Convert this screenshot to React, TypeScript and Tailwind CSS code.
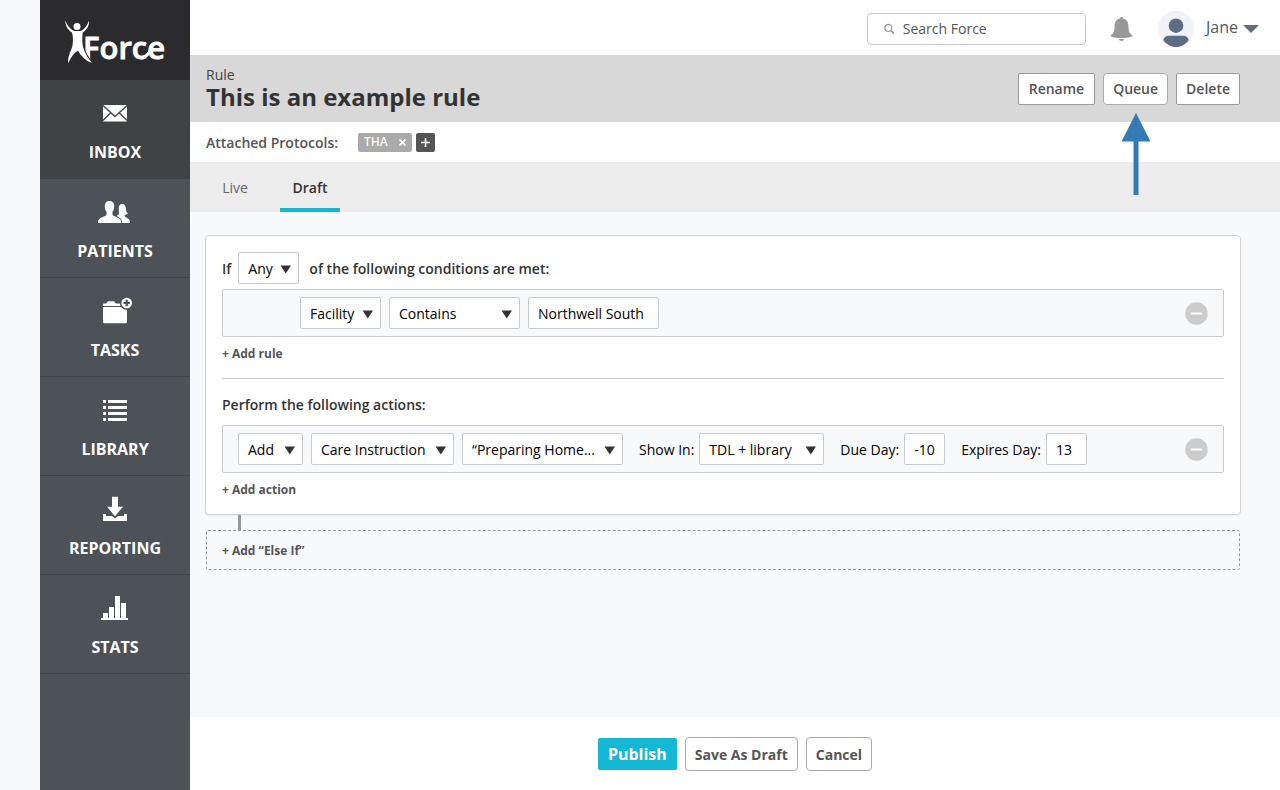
import type { ReactNode } from "react"

type NavItem = {
  label: string
  icon: ReactNode
  active?: boolean
}

type SelectProps = {
  label: string
  options: string[]
  className: string
}

const navItems: NavItem[] = [
  {
    label: "INBOX",
    active: true,
    icon: (
      <>
        <path d="M8 7h24v16.500H8z" />
        <path
          d="M8 7.500l12 11 12-11M8 22.500l8-8M32 22.500l-8-8"
          fill="none"
          stroke="#3f4344"
          strokeWidth="1.300"
        />
      </>
    ),
  },
  {
    label: "PATIENTS",
    icon: (
      <>
        <path d="M27 7c2.500 0 3.800 1.800 3.900 4.400.1 2.200.7 3.900 2 5.400-.9.800-2 1.100-3.200 1.100v1c0 1.500 5.300 2.400 5.300 5.600V26H24l-3-6.400 2.500-2c1-1.400.2-3.200.2-5.900C23.700 9 24.700 7 27 7z" />
        <path
          d="M14.500 4c3 0 4.700 1.800 4.700 4.700s-.6 4.900-1.700 6.100v2.700c0 2.200 8.700 2.600 8.700 7.500v1H3v-1c0-4.900 8.500-5.300 8.500-7.500v-2.700c-1.100-1.200-1.700-3.200-1.700-6.100S11.500 4 14.500 4z"
          stroke="#4d5158"
          strokeWidth="1.800"
          paintOrder="stroke"
        />
      </>
    ),
  },
  {
    label: "TASKS",
    icon: (
      <>
        <path d="M8 10V8.500c0-.7.4-1 1-1h2.200l1.800-2.300h6l1.800 2.300H32V10z" />
        <path d="M8 11h24v15c0 .7-.4 1.200-1.200 1.200H9.200C8.400 27.200 8 26.700 8 26z" />
        <circle cx="31.700" cy="7" r="6.800" fill="#4d5158" />
        <circle cx="31.700" cy="7" r="5.300" />
        <path d="M31.700 3.800v6.400M28.500 7h6.400" stroke="#4d5158" strokeWidth="2.200" />
      </>
    ),
  },
  {
    label: "LIBRARY",
    icon: (
      <path d="M8 5h3v3H8zM13 5h19v3H13zM8 11h3v3H8zM13 11h19v3H13zM8 17h3v3H8zM13 17h19v3H13zM8 23h3v3H8zM13 23h19v3H13z" />
    ),
  },
  {
    label: "REPORTING",
    icon: (
      <>
        <path d="M17 2.700h6v10h5l-8 9.600-8-9.600h5z" />
        <path d="M8 20h3v2h6l3 2.500 3-2.500h6v-2h3v7H8z" />
      </>
    ),
  },
  {
    label: "STATS",
    icon: (
      <path d="M6 25h27v2H6zM8 20h5v5H8zM14 14h5v11h-5zM20 3h5v22h-5zM26 10h5v15h-5z" />
    ),
  },
]

const Logo = (): JSX.Element => (
  <svg width="110" height="60" viewBox="-3 -6 110 60" fill="#fff">
    <text
      x="20"
      y="43"
      fontSize="31"
      fontWeight="600"
      fontFamily="Open Sans, sans-serif"
      stroke="#fff"
      strokeWidth=".8">
      Force
    </text>
    {/* ribbon joining the c and the e */}
    <path d="M80 41.500c5-.5 6.500-7 9.500-10" fill="none" stroke="#fff" strokeWidth="3" />
    <g stroke="#2b2b2d" strokeWidth="2" paintOrder="stroke">
      <path d="M2.300 4.500C2.200 10 5 14 9 16.500c1.200 4 1.300 9 .3 14C7.500 36 4.500 41 5.300 47c2.700-6 6-10.500 9.700-12.500 3 5.500 7.500 10.500 14 12.300-4-4.500-7.500-10-9-16-1-5-.8-10-.2-14.300C23.500 14 26.500 10 26 4.500c-1.600 5-4.500 9-8.500 10.500h-6C7.500 13.500 4.300 10 2.300 4.500z" />
      <circle cx="14" cy="10.500" r="3.500" />
    </g>
  </svg>
)

const Sidebar = (): JSX.Element => (
  <aside className="w-[150px] shrink-0 bg-[#4d5158]">
    <a
      href="#"
      aria-label="Force"
      className="flex justify-center items-center h-20 bg-[#2b2b2d]">
      <Logo />
    </a>
    <nav>
      {navItems.map(({ label, icon, active }) => (
        <a
          key={label}
          href="#"
          className={`flex flex-col items-center gap-3 pt-[18px] h-[99px] text-white text-base leading-6 font-bold border-b border-[#404448] ${
            active ? "bg-[#3f4344]" : ""
          }`}>
          <svg width="40" height="30" viewBox="0 0 40 30" fill="#fff">
            {icon}
          </svg>
          {label}
        </a>
      ))}
    </nav>
  </aside>
)

const Header = (): JSX.Element => (
  <header className="flex justify-end items-center pt-[3px] pr-[21px] h-[55px] bg-white">
    <label className="flex gap-2 items-center px-4 w-[219px] h-8 bg-white border border-[#c8c8c8] rounded">
      <svg width="12" height="12" viewBox="0 0 12 12" fill="none" stroke="#999">
        <circle cx="4.800" cy="4.800" r="3.900" strokeWidth="1.400" />
        <path d="M7.600 7.600l3.600 3.600" strokeWidth="1.900" />
      </svg>
      <input
        type="search"
        aria-label="Search Force"
        placeholder="Search Force"
        className="w-full text-sm placeholder:text-[#555] outline-none"
      />
    </label>
    <button type="button" aria-label="Notifications" className="ml-6">
      <svg width="23" height="26" viewBox="0 0 23 26" fill="#999">
        <path d="M11.500 1c1 0 1.700.7 1.700 1.600 3.800 1 5.300 4 5.300 8.400 0 4.500 1 6.500 3.700 8.200.5.400.4 1-.2 1.200-3 1-6.500 1.500-10.500 1.500S4 21.400 1 20.400c-.6-.2-.7-.8-.2-1.200C3.500 17.500 4.500 15.500 4.500 11c0-4.400 1.500-7.400 5.300-8.400C9.800 1.700 10.500 1 11.500 1z" />
        <path d="M8.800 23h5.400c-.4 1.200-1.400 1.900-2.700 1.900S9.200 24.200 8.800 23z" />
      </svg>
    </button>
    <button
      type="button"
      className="flex gap-[5px] items-center ml-[25px] text-[#4d5a6c] text-base">
      <svg width="36" height="36" viewBox="0 0 36 36">
        <circle cx="18" cy="18" r="18" fill="#f0f2f6" />
        <circle cx="18" cy="14.700" r="7.300" fill="#5d6d84" />
        <path
          d="M11 24.700h14c3 0 5 1.500 5.800 4.300-3 4.300-7.500 7-12.800 7S8.200 33.300 5.200 29c.8-2.800 2.800-4.300 5.800-4.300z"
          fill="#5d6d84"
        />
      </svg>
      <span className="pb-1 pl-[7px]">Jane</span>
      <svg width="16" height="8" viewBox="0 0 16 8">
        <path d="M0 0h16L8 8z" fill="#5d6d84" />
      </svg>
    </button>
  </header>
)

const Select = ({ label, options, className }: SelectProps): JSX.Element => (
  <span className={`relative flex ${className}`}>
    <select
      aria-label={label}
      className="appearance-none pt-[2px] pr-5 pl-[9px] w-full h-8 text-black text-sm font-normal bg-white border border-[#c8cacc] rounded-xs">
      {options.map((option) => (
        <option key={option}>{option}</option>
      ))}
    </select>
    <svg
      className="absolute right-[7px] top-[13px] pointer-events-none"
      width="12"
      height="9"
      viewBox="0 0 12 9">
      <path d="M.5.500h10.500L5.800 8.500z" fill="#333" />
    </svg>
  </span>
)

const RemoveButton = ({ label }: { label: string }): JSX.Element => (
  <button type="button" aria-label={label} className="ml-auto">
    <svg width="23" height="23" viewBox="0 0 23 23">
      <circle cx="11.500" cy="11.500" r="11.300" fill="#ccc" />
      <path d="M6 11.500h11" stroke="#fff" strokeWidth="2" />
    </svg>
  </button>
)

const RuleCard = (): JSX.Element => (
  <section className="px-4 py-4 text-[#333] text-sm font-semibold bg-white border border-[#d0d2d4] rounded shadow-xs">
    <div className="flex items-center">
      <span className="pt-[2px]">If</span>
      <Select label="Match" options={["Any", "All"]} className="ml-[7px] mr-[10px] w-[61px]" />
      <span className="pt-[2px]">of the following conditions are met:</span>
    </div>
    <div className="flex gap-2 items-center mt-[5px] pr-[15px] pl-[77px] h-12 bg-[#f8f9fb] border border-[#c8cacc] rounded-xs">
      <Select label="Field" options={["Facility"]} className="w-[81px]" />
      <Select label="Operator" options={["Contains"]} className="w-[131px]" />
      <input
        type="text"
        aria-label="Value"
        defaultValue="Northwell South"
        className="px-[9px] w-[131px] h-8 text-black font-normal bg-white border border-[#c8cacc] rounded-xs"
      />
      <RemoveButton label="Remove rule" />
    </div>
    <button type="button" className="block mt-[9px] text-[#555] text-xs leading-4 font-bold">
      + Add rule
    </button>
    <hr className="mt-4 border-[#c8cacc]" />
    <h2 className="mt-4">Perform the following actions:</h2>
    <div className="flex gap-2 items-center mt-[10px] px-[15px] h-12 text-black font-normal bg-[#f8f9fb] border border-[#c8cacc] rounded-xs">
      <Select label="Action" options={["Add"]} className="w-[65px]" />
      <Select label="Type" options={["Care Instruction"]} className="w-[143px]" />
      <Select label="Instruction" options={["“Preparing Home..."]} className="w-[161px]" />
      <div className="flex gap-[5px] items-center ml-2">
        <span className="pt-[2px]">Show In:</span>
        <Select label="Show In" options={["TDL + library"]} className="w-[125px]" />
      </div>
      <label className="flex gap-[5px] items-center ml-2">
        <span className="pt-[2px]">Due Day:</span>
        <input
          type="text"
          defaultValue="-10"
          className="px-[9px] w-[41px] h-8 bg-white border border-[#c8cacc] rounded-xs"
        />
      </label>
      <label className="flex gap-[5px] items-center ml-2">
        <span className="pt-[2px]">Expires Day:</span>
        <input
          type="text"
          defaultValue="13"
          className="px-[9px] w-[41px] h-8 bg-white border border-[#c8cacc] rounded-xs"
        />
      </label>
      <RemoveButton label="Remove action" />
    </div>
    <button type="button" className="block mt-[9px] text-[#555] text-xs leading-4 font-bold">
      + Add action
    </button>
  </section>
)

const App = (): JSX.Element => {
  return (
    <div className="flex pl-10 min-h-screen bg-[#f8f9fb] font-['Open_Sans',sans-serif]">
      <Sidebar />
      <div className="flex flex-col flex-1 min-w-0">
        <Header />
        {/* TITLE */}
        <div className="flex justify-between items-center pl-4 pr-10 h-[67px] bg-[#d8d8d8]">
          <div className="text-[#333]">
            <p className="text-sm leading-4 text-[#444]">Rule</p>
            <h1 className="text-2xl leading-7 font-bold">This is an example rule</h1>
          </div>
          <div className="flex gap-2 items-center text-[#555] text-sm font-semibold">
            <button
              type="button"
              className="px-[10px] h-8 bg-white border border-[#999] rounded-xs">
              Rename
            </button>
            <div className="relative">
              <button
                type="button"
                className="px-[9px] h-8 bg-white border border-[#aaa] rounded-sm">
                Queue
              </button>
              <svg
                className="absolute left-1/2 top-full mt-2 -translate-x-1/2 pointer-events-none"
                width="29"
                height="82"
                viewBox="0 0 29 82"
                fill="#337ab7">
                <path d="M14.500 0L29 28.500H17V82h-5V28.500H0z" />
              </svg>
            </div>
            <button
              type="button"
              className="px-[9px] h-8 bg-white border border-[#999] rounded-xs">
              Delete
            </button>
          </div>
        </div>
        {/* PROTOCOLS */}
        <div className="flex items-center px-4 h-10 text-[#555] text-sm font-semibold bg-white">
          <span className="pt-[2px]">Attached Protocols:</span>
          <span className="flex justify-between items-center ml-5 px-[6px] w-[54px] h-[19px] text-white text-xs bg-[#aaa] rounded-xs">
            THA
            <button type="button" aria-label="Remove THA">
              <svg width="7" height="7" viewBox="0 0 7 7" stroke="#fff" strokeWidth="1.800">
                <path d="M.5.500l6 6M6.500.500l-6 6" />
              </svg>
            </button>
          </span>
          <button
            type="button"
            aria-label="Add protocol"
            className="flex justify-center items-center ml-1 w-[19px] h-[19px] bg-[#555] rounded-xs">
            <svg width="9" height="9" viewBox="0 0 9 9" stroke="#fff" strokeWidth="1.600">
              <path d="M4.500 0v9M0 4.500h9" />
            </svg>
          </button>
        </div>
        {/* TABS */}
        <div className="flex gap-5 px-[30px] h-[50px] text-sm bg-[#ededed]">
          <button type="button" className="pt-[2px] w-[30px] text-[#666] border-y-4 border-transparent">
            Live
          </button>
          <button
            type="button"
            className="ml-[10px] pt-[2px] w-[60px] text-[#333] font-semibold border-y-4 border-t-transparent border-b-[#14b8d4]">
            Draft
          </button>
        </div>
        {/* RULE */}
        <main className="flex-1 pt-[23px] pr-[39px] pb-6 pl-[15px]">
          <RuleCard />
          <div className="ml-[33px] w-[3px] h-[15px] bg-[#999]" />
          <div className="flex items-center mx-px px-[15px] h-10 border border-dashed border-[#999] rounded-xs">
            <button type="button" className="pt-[2px] text-[#555] text-xs font-bold">
              + Add “Else If”
            </button>
          </div>
        </main>
        <footer className="flex gap-2 justify-center items-center h-[73px] text-[#555] text-sm font-bold bg-white">
          <button
            type="button"
            className="px-[10px] h-8 text-white text-base bg-[#14b8d4] rounded-xs">
            Publish
          </button>
          <button type="button" className="px-[9px] pt-[2px] h-[34px] bg-white border border-[#aaa] rounded-sm">
            Save As Draft
          </button>
          <button type="button" className="px-[9px] pt-[2px] h-[34px] bg-white border border-[#aaa] rounded-sm">
            Cancel
          </button>
        </footer>
      </div>
    </div>
  )
}

export default App
